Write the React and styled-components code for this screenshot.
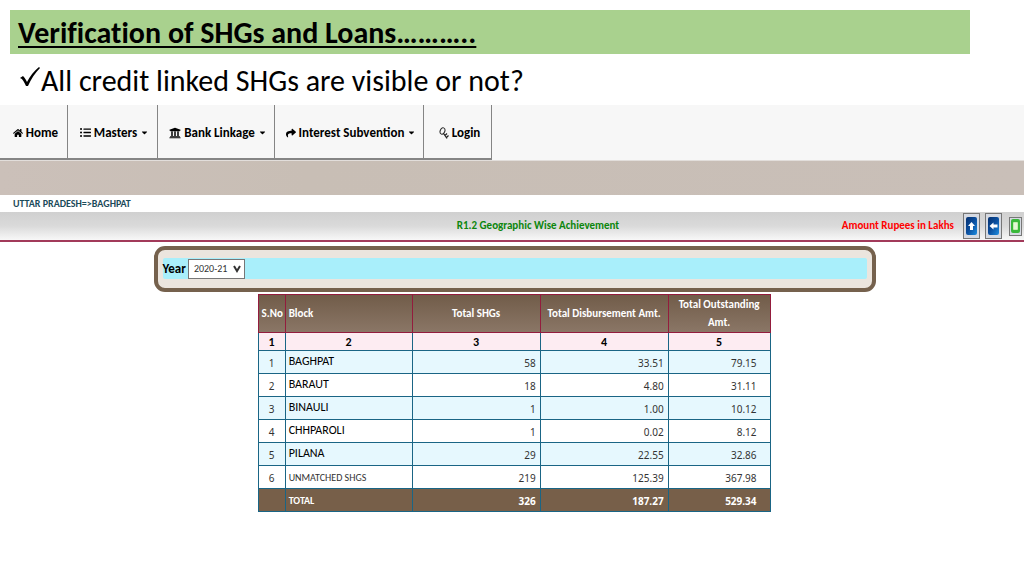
import React, { useState } from 'react'
import styled, { createGlobalStyle } from 'styled-components'
import { FaHome, FaListUl, FaUniversity, FaShare, FaCaretDown } from 'react-icons/fa'

const narrow = 'Carlito, Lato, sans-serif'
const plain = '"Noto Sans", "Open Sans", sans-serif'

const GlobalStyle = createGlobalStyle`
  *, *::before, *::after {
    box-sizing: border-box;
  }

  body {
    margin: 0;
    background: #fff;
    color: #000;
    font-family: ${plain};
  }
`

const Page = styled.main`
  padding-top: 10px;
  font-variant-ligatures: none;
`

const Title = styled.h1`
  width: 93.75%;
  height: 44px;
  margin: 0 0 0 10px;
  padding: 0 8px;
  background: #a9d18e;
  font: 700 30px/46px ${narrow};
  font-variant-ligatures: none;
  text-decoration: underline;
  text-decoration-thickness: 2px;
  text-underline-offset: 3px;
  white-space: nowrap;
`

const Question = styled.p`
  display: flex;
  align-items: center;
  height: 51px;
  margin: 0;
  padding: 2px 0 0 20px;
  font: 400 30px/36px ${narrow};
  font-variant-ligatures: none;
  white-space: nowrap;
`

const Tick = styled.svg`
  width: 21px;
  height: 20px;
  margin-bottom: 8px;
`

const Nav = styled.nav`
  display: flex;
  height: 56px;
  background: #f7f7f7;
  border-bottom: 1px solid #e2dedb;
`

const NavButton = styled.button`
  display: flex;
  align-items: center;
  justify-content: center;
  gap: 3px;
  width: ${p => p.$width}px;
  padding: 2px 0 0 4px;
  border: 0;
  border-right: 1px solid #858585;
  border-bottom: 2px solid #858585;
  background: #f7f7f7;
  color: #000;
  font: 700 13px/20px ${narrow};
  white-space: nowrap;

  svg {
    flex: none;
  }
`

const Banner = styled.div`
  height: 34px;
  background: linear-gradient(90deg, #cbc0b9, #c8beb5 30%, #c9bfb8);
`

const Crumb = styled.p`
  margin: 0;
  padding: 0 13px;
  color: #1b4a5a;
  font: 700 10px/17px ${narrow};
`

const ReportBar = styled.header`
  display: grid;
  grid-template-columns: 1fr auto 1fr;
  align-items: center;
  height: 30px;
  padding-left: 52px;
  border-bottom: 2px solid #a23a5a;
  background: linear-gradient(#d0d0d0, #dadada 50%, #f8f8f8);
`

const ReportName = styled.h2`
  grid-column: 2;
  margin: 0;
  color: #0c860c;
  font: 700 11px/16px ${narrow};
`

const Tools = styled.div`
  display: flex;
  align-items: center;
  justify-content: flex-end;
  gap: 5px;
  padding-right: 2px;
`

const Unit = styled.span`
  margin-right: 4px;
  color: #f00;
  font: 700 11px/16px ${narrow};
`

const ToolButton = styled.button`
  display: flex;
  align-items: center;
  justify-content: center;
  width: ${p => (p.$small ? 13 : 17)}px;
  height: ${p => (p.$small ? 19 : 26)}px;
  margin-left: ${p => (p.$small ? 2 : 0)}px;
  padding: 0;
  border: 1px solid #777;
  background: #d6dae2;
`

const FilterBox = styled.form`
  width: 70.5%;
  height: 46px;
  margin: 4px 0 0 15%;
  padding: 8px 5px;
  border: 4px solid #75614d;
  border-radius: 11px;
  background: #ebe5de;
`

const FilterRow = styled.div`
  display: flex;
  align-items: center;
  gap: 2px;
  height: 21px;
  border-radius: 2px;
  background: #a9effb;
`

const YearLabel = styled.label`
  font: 700 13px/20px ${narrow};
`

const YearField = styled.span`
  position: relative;
  display: flex;
`

const YearSelect = styled.select`
  appearance: none;
  width: 57px;
  height: 20px;
  padding: 0 0 0 5px;
  border: 1px solid #777;
  border-radius: 0;
  background: #fff;
  color: #333;
  font: 400 10px/18px ${narrow};
`

const Chevron = styled.svg`
  position: absolute;
  right: 4px;
  top: 6px;
  width: 8px;
  height: 8px;
  pointer-events: none;
`

const Table = styled.table`
  width: 50.1%;
  margin: 2px 0 0 25.15%;
  border-collapse: collapse;
  table-layout: fixed;
`

const Head = styled.th`
  height: 38px;
  padding: 0 ${p => (p.$wide ? 8 : 3)}px;
  border: 1px solid #931c3d;
  color: #fff;
  font: 700 11px/18px ${narrow};
  text-align: ${p => p.$align || 'center'};
`

const HeadRow = styled.tr`
  background: linear-gradient(#715c49, #8b7767);
`

const IndexCell = styled.td`
  height: 18px;
  padding: 0;
  border: 1px solid #1a6585;
  border-top-color: #931c3d;
  background: #fdecf2;
  font: 700 12px/16px ${narrow};
  text-align: center;
`

const BodyRow = styled.tr`
  background: ${p => (p.$total ? '#775f49' : p.$striped ? '#e6f8fe' : '#fff')};
  color: ${p => (p.$total ? '#fff' : '#333')};
  font-weight: ${p => (p.$total ? 700 : 400)};
`

const Cell = styled.td`
  height: 23px;
  padding: 2px ${p => (p.$last ? 13 : 4)}px 0 4px;
  border: 1px solid #1a6585;
  font-family: ${plain};
  font-size: 10px;
  line-height: 16px;
  text-align: ${p => p.$align || 'right'};
`

const NameCell = styled(Cell)`
  padding: ${p => (p.$strong ? '0 3px 2px' : '1px 3px 0')};
  color: ${p => (p.$strong ? '#000' : 'inherit')};
  font-family: ${narrow};
  font-size: ${p => (p.$strong ? 12 : 10)}px;
  text-align: left;
`

const ArrowIcon = ({ turn = 0 }) => (
  <svg width="13" height="18" viewBox="0 0 13 18" aria-hidden="true">
    <defs>
      <linearGradient id={`blue${turn}`} x1="0" y1="0" x2="1" y2="1">
        <stop offset="0" stopColor="#05306f" />
        <stop offset="0.5" stopColor="#0b4f9f" />
        <stop offset="1" stopColor="#1d8de0" />
      </linearGradient>
    </defs>
    <rect x="1" width="11" height="18" rx="2" fill={`url(#blue${turn})`} />
    <path d="M6.500 5L10 9H8v4H5V9H3z" fill="#fff" transform={`rotate(${turn} 6.5 9)`} />
  </svg>
)

const SheetIcon = () => (
  <svg width="9" height="14" viewBox="0 0 9 14" aria-hidden="true">
    <rect width="9" height="14" rx="2" fill="#39b83a" />
    <rect x="2" y="3" width="5" height="8" rx="1" fill="#c4f0ae" />
    <path d="M3 5h3M3 7h3M3 9h3" stroke="#fff" />
  </svg>
)

const KeyIcon = () => (
  <svg width="10" height="14" viewBox="0 0 10 14" fill="none" stroke="#222" aria-hidden="true">
    <ellipse cx="3.500" cy="5" rx="2.300" ry="3.300" transform="rotate(20 3.500 5)" />
    <path d="M4.500 7.500L8 12.500M6 9.500l2-2M7.500 11.500l2-2" strokeWidth="1.200" />
  </svg>
)

const menu = [
  { label: 'Home', icon: <FaHome size={10} />, width: 68 },
  { label: 'Masters', icon: <FaListUl size={11} />, width: 90, caret: true },
  { label: 'Bank Linkage', icon: <FaUniversity size={12} />, width: 117, caret: true },
  { label: 'Interest Subvention', icon: <FaShare size={10} />, width: 149, caret: true },
  { label: 'Login', icon: <KeyIcon />, width: 68 },
]

const blocks = [
  ['BAGHPAT', '58', '33.51', '79.15'],
  ['BARAUT', '18', '4.80', '31.11'],
  ['BINAULI', '1', '1.00', '10.12'],
  ['CHHPAROLI', '1', '0.02', '8.12'],
  ['PILANA', '29', '22.55', '32.86'],
  ['UNMATCHED SHGS', '219', '125.39', '367.98'],
]

const App = () => {
  const [year, setYear] = useState('2020-21')

  return (
    <Page>
      <GlobalStyle />
      <Title>Verification of SHGs and Loans………..</Title>
      <Question>
        <Tick viewBox="0 0 21 20" aria-hidden="true">
          <path d="M0 11l3-2c2 2 3 4 4 6C10 9 14 4 19 0l1 1C15 6 11 12 8 19H6C4 15 3 12 0 11z" />
        </Tick>
        All credit linked SHGs are visible or not?
      </Question>

      <Nav>
        {menu.map(item => (
          <NavButton key={item.label} type="button" $width={item.width}>
            {item.icon}
            {item.label}
            {item.caret && <FaCaretDown size={9} />}
          </NavButton>
        ))}
      </Nav>
      <Banner />
      <Crumb>UTTAR PRADESH=&gt;BAGHPAT</Crumb>

      <ReportBar>
        <ReportName>R1.2 Geographic Wise Achievement</ReportName>
        <Tools>
          <Unit>Amount Rupees in Lakhs</Unit>
          <ToolButton type="button" aria-label="Up"><ArrowIcon /></ToolButton>
          <ToolButton type="button" aria-label="Back"><ArrowIcon turn={-90} /></ToolButton>
          <ToolButton type="button" aria-label="Export" $small><SheetIcon /></ToolButton>
        </Tools>
      </ReportBar>

      <FilterBox>
        <FilterRow>
          <YearLabel htmlFor="year">Year</YearLabel>
          <YearField>
            <YearSelect id="year" value={year} onChange={e => setYear(e.target.value)}>
              <option>2020-21</option>
            </YearSelect>
            <Chevron viewBox="0 0 8 8" fill="none" stroke="#333" strokeWidth="2">
              <path d="M1 1l3 5 3-5" />
            </Chevron>
          </YearField>
        </FilterRow>
      </FilterBox>

      <Table>
        <colgroup>
          <col width="5.3%" />
          <col width="24.8%" />
          <col width="25%" />
          <col width="25%" />
          <col width="19.9%" />
        </colgroup>
        <thead>
          <HeadRow>
            <Head>S.No</Head>
            <Head $align="left">Block</Head>
            <Head>Total SHGs</Head>
            <Head>Total Disbursement Amt.</Head>
            <Head $wide>Total Outstanding Amt.</Head>
          </HeadRow>
        </thead>
        <tbody>
          <tr>
            {[1, 2, 3, 4, 5].map(n => <IndexCell key={n}>{n}</IndexCell>)}
          </tr>
          {blocks.map(([name, groups, paid, due], i) => (
            <BodyRow key={name} $striped={i % 2 === 0}>
              <Cell $align="center">{i + 1}</Cell>
              <NameCell $strong={i < 5}>{name}</NameCell>
              <Cell>{groups}</Cell>
              <Cell>{paid}</Cell>
              <Cell $last>{due}</Cell>
            </BodyRow>
          ))}
          <BodyRow $total>
            <Cell />
            <NameCell>TOTAL</NameCell>
            <Cell>326</Cell>
            <Cell>187.27</Cell>
            <Cell $last>529.34</Cell>
          </BodyRow>
        </tbody>
      </Table>
    </Page>
  )
}

export default App
